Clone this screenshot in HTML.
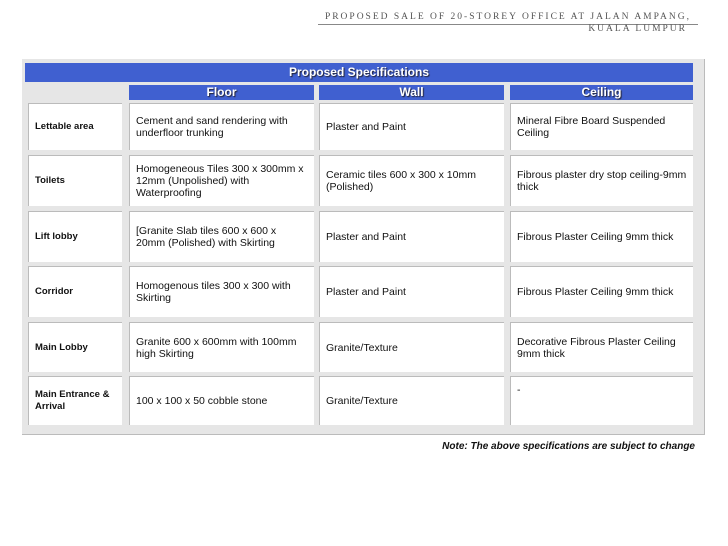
<!DOCTYPE html>
<html><head><style>
body{margin:0;width:728px;height:546px;background:#fff;position:relative;overflow:hidden;font-family:"Liberation Sans",Arial,sans-serif}
.h{position:absolute;font-family:"Liberation Serif",serif;font-size:9.5px;letter-spacing:2px;color:#555;white-space:nowrap}
.box{position:absolute;left:22px;top:59px;width:682px;height:375px;background:#e6e6e6;border-right:1px solid #bbb;border-bottom:1px solid #bbb}
.bar{position:absolute;background:#4060d0;color:#fff;font-weight:bold;text-align:center;font-size:12px;text-shadow:1px 1px 1px #223}
.c{position:absolute;background:#fff;border-top:1px solid #bbb;border-left:1px solid #bbb;box-sizing:border-box;display:flex;align-items:center;padding:0 6px;font-size:10.5px;line-height:12px;color:#111}
.l{font-weight:bold;font-size:9.5px}
.n{position:absolute;right:33px;top:441px;font-size:10px;font-style:italic;font-weight:bold;color:#111}
</style></head><body>
<div class="h" style="right:37px;top:12px">PROPOSED SALE OF 20-STOREY OFFICE AT JALAN AMPANG,</div>
<div style="position:absolute;left:318px;top:24px;width:380px;height:1px;background:#888"></div>
<div class="h" style="right:41px;top:24px">KUALA LUMPUR</div>
<div class="box"></div>
<div class="bar" style="left:25px;top:63px;width:668px;height:19px;line-height:19px">Proposed Specifications</div>
<div class="bar" style="left:129px;top:85px;width:185px;height:15px;line-height:15px">Floor</div>
<div class="bar" style="left:319px;top:85px;width:185px;height:15px;line-height:15px">Wall</div>
<div class="bar" style="left:510px;top:85px;width:183px;height:15px;line-height:15px">Ceiling</div>

<div class="c l" style="left:28px;top:103px;width:94px;height:47px">Lettable area</div>
<div class="c" style="left:129px;top:103px;width:185px;height:47px">Cement and sand rendering with underfloor trunking</div>
<div class="c" style="left:319px;top:103px;width:185px;height:47px">Plaster and Paint</div>
<div class="c" style="left:510px;top:103px;width:183px;height:47px">Mineral Fibre Board Suspended Ceiling</div>

<div class="c l" style="left:28px;top:155px;width:94px;height:51px">Toilets</div>
<div class="c" style="left:129px;top:155px;width:185px;height:51px">Homogeneous Tiles 300 x 300mm x 12mm (Unpolished) with Waterproofing</div>
<div class="c" style="left:319px;top:155px;width:185px;height:51px">Ceramic tiles 600 x 300 x 10mm (Polished)</div>
<div class="c" style="left:510px;top:155px;width:183px;height:51px">Fibrous plaster dry stop ceiling-9mm thick</div>

<div class="c l" style="left:28px;top:211px;width:94px;height:51px">Lift lobby</div>
<div class="c" style="left:129px;top:211px;width:185px;height:51px">[Granite Slab tiles 600 x 600 x 20mm (Polished) with Skirting</div>
<div class="c" style="left:319px;top:211px;width:185px;height:51px">Plaster and Paint</div>
<div class="c" style="left:510px;top:211px;width:183px;height:51px">Fibrous Plaster Ceiling 9mm thick</div>

<div class="c l" style="left:28px;top:266px;width:94px;height:51px">Corridor</div>
<div class="c" style="left:129px;top:266px;width:185px;height:51px">Homogenous tiles 300 x 300 with Skirting</div>
<div class="c" style="left:319px;top:266px;width:185px;height:51px">Plaster and Paint</div>
<div class="c" style="left:510px;top:266px;width:183px;height:51px">Fibrous Plaster Ceiling 9mm thick</div>

<div class="c l" style="left:28px;top:322px;width:94px;height:50px">Main Lobby</div>
<div class="c" style="left:129px;top:322px;width:185px;height:50px">Granite 600 x 600mm with 100mm high Skirting</div>
<div class="c" style="left:319px;top:322px;width:185px;height:50px">Granite/Texture</div>
<div class="c" style="left:510px;top:322px;width:183px;height:50px">Decorative Fibrous Plaster Ceiling 9mm thick</div>

<div class="c l" style="left:28px;top:376px;width:94px;height:49px">Main Entrance &amp; Arrival</div>
<div class="c" style="left:129px;top:376px;width:185px;height:49px">100 x 100 x 50 cobble stone</div>
<div class="c" style="left:319px;top:376px;width:185px;height:49px">Granite/Texture</div>
<div class="c" style="left:510px;top:376px;width:183px;height:49px;align-items:flex-start;padding-top:7px">-</div>

<div class="n">Note: The above specifications are subject to change</div>
</body></html>
